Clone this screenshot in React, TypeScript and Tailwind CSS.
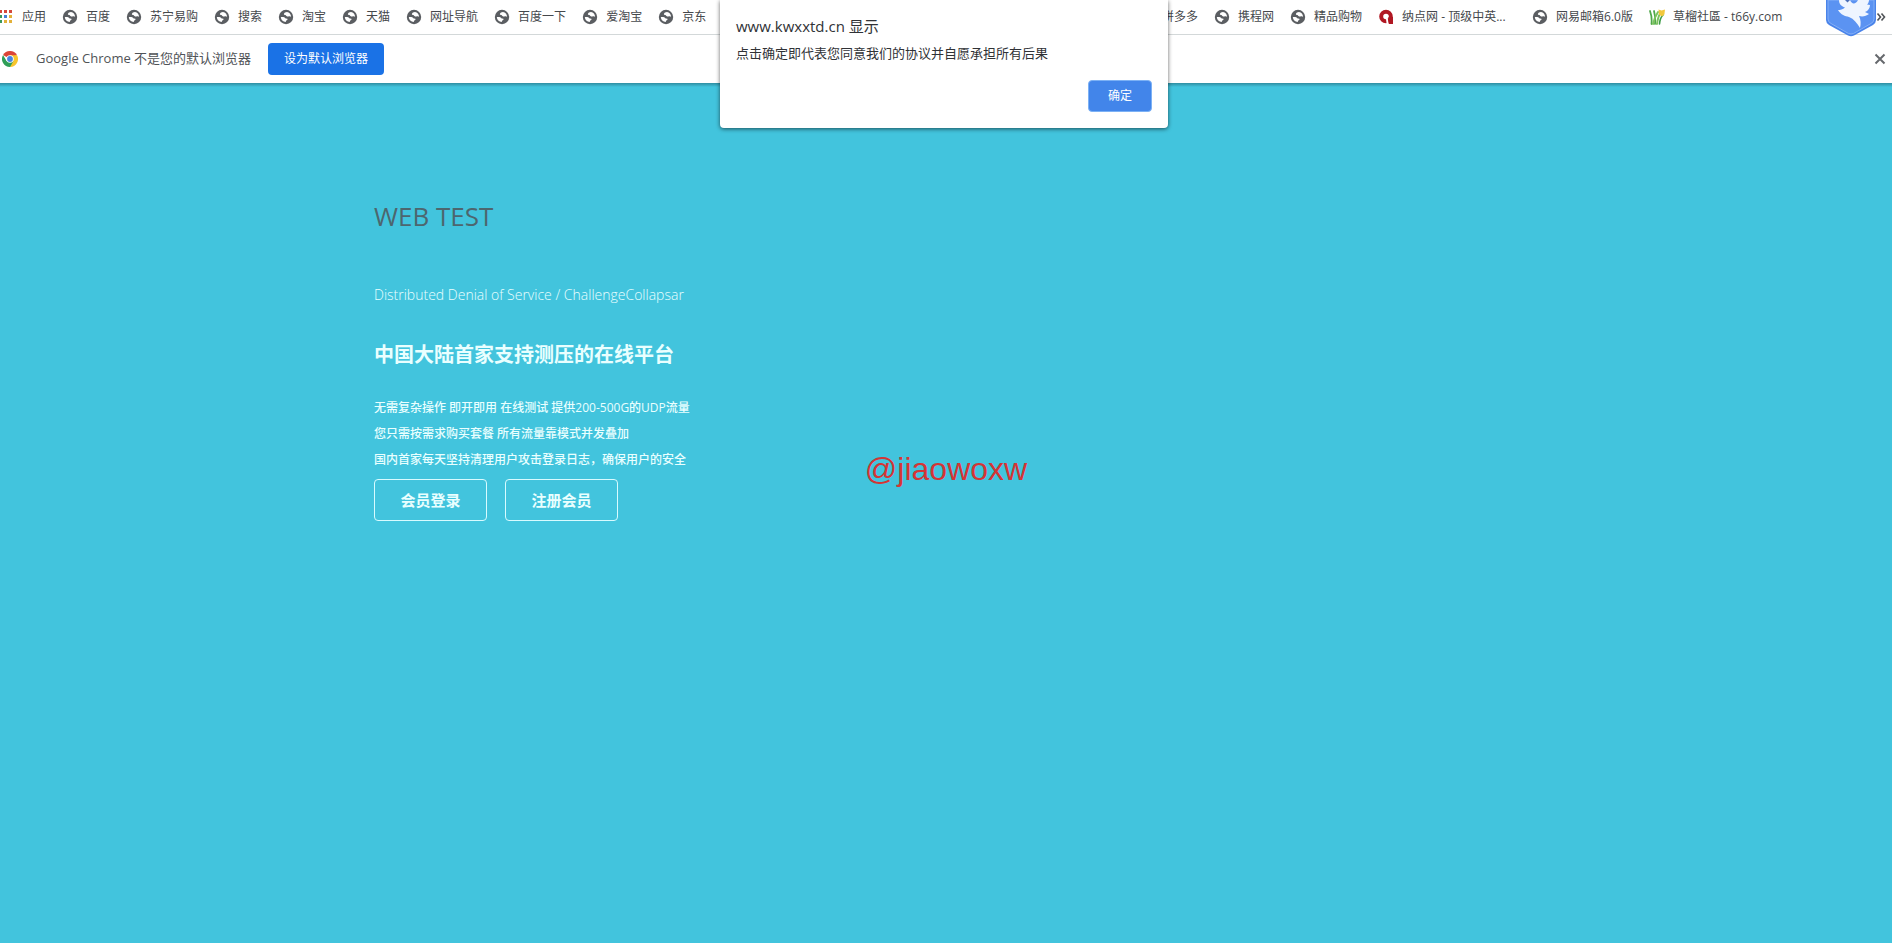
import React from 'react'

interface Bookmark {
  label: string
  icon?: React.ReactElement
  labelClass?: string
}

function GlobeIcon (): React.ReactElement {
  return (
    <svg viewBox="0 0 16 16" className="w-4 h-4 shrink-0">
      <circle cx="8" cy="8" r="7.2" fill="#5b5e62" />
      <path d="M9 3c-1.400 0-3 .9-3.100 1.900-.1.900.8.900 1.500 1.200.6.300.7 1.200 1.700 1.300.9.100 1.500-.4 2.400-.2.700.1 1 .5 1.600.5C13 5.200 11.300 3.300 9 3z" fill="#fff" />
      <path d="M2.800 8c1 .1 2.300-.1 3.300.2.900.3 1 1 1.800 1.200.7.200 1.500.1 1.700.7.200.8-1.100 1-1.400 1.700-.2.400-.2.800-.5 1.200C5 12.900 2.900 11 2.800 8z" fill="#fff" />
    </svg>
  )
}

function AppsIcon (): React.ReactElement {
  return (
    <svg viewBox="2 0 14 16" className="w-3.5 h-4 shrink-0">
      <path d="M1 1h3v3H1zM6 1h3v3H6zM11 1h3v3h-3z" fill="#d5493d" />
      <path d="M1 6h3v3H1zM1 11h3v3H1z" fill="#3c9a5b" />
      <path d="M6 6h3v3H6z" fill="#4380d6" />
      <path d="M11 6h3v3h-3zM6 11h3v3H6zM11 11h3v3h-3z" fill="#e3b13a" />
    </svg>
  )
}

function NadianIcon (): React.ReactElement {
  return (
    <svg viewBox="0 0 16 16" className="w-4 h-4 shrink-0">
      <circle cx="8" cy="7.500" r="4.800" fill="none" stroke="#b01722" strokeWidth="4" />
      <path d="M10.500 8H15v7h-4.500z" fill="#b01722" />
      <path d="M8 10l1.800-.5.700 5.500H8.600z" fill="#fff" />
    </svg>
  )
}

function GrassIcon (): React.ReactElement {
  return (
    <svg viewBox="0 0 16 16" className="w-4 h-4 shrink-0" fill="none" strokeLinecap="round">
      <path d="M2.500 15C3 10 2.500 6 1 2M6 15c.5-5 0-9-1-13" stroke="#4fa84a" strokeWidth="1.800" />
      <path d="M4 15c1-5 3-9 5-12M8 15c.5-4 1.500-8 3.500-11" stroke="#7cc35d" strokeWidth="2" />
      <path d="M10.500 15c.3-4 1.500-7 3.500-9" stroke="#3f9c48" strokeWidth="1.600" />
      <path d="M9.500.500l3 1L16 .500l-.6 5-2.400 2-3-2z" fill="#f2c83c" />
    </svg>
  )
}

function ChromeIcon (): React.ReactElement {
  return (
    <svg viewBox="0 0 16 16" className="w-4 h-4 shrink-0">
      <path d="M8 8L1.070 4A8 8 0 0 1 14.930 4z" fill="#dc4437" />
      <path d="M8 8l6.930-4A8 8 0 0 1 8 16z" fill="#f7c52c" />
      <path d="M1.070 4A8 8 0 0 0 8 16l3.460-6L8 8 4.540 10z" fill="#2f9e57" />
      <path d="M8 4.200h7.050L14 8H8z" fill="#f7c52c" />
      <circle cx="8" cy="8" r="3.800" fill="#fff" />
      <circle cx="8" cy="8" r="2.900" fill="#4684e0" />
    </svg>
  )
}

function BirdBadge (): React.ReactElement {
  return (
    <svg viewBox="0 0 52 37" className="w-[52px] h-[37px]">
      <path d="M1 0h50v20q0 3-3 5L29 35.500q-3 1.500-6 0L4 25q-3-2-3-5z" fill="#4a84ea" />
      <path d="M3 0h46v19q0 3-3 4.500L28.500 33.500q-2.500 1-5 0L6 23.500Q3 22 3 19z" fill="#5b93f2" stroke="#83aff7" />
      <path d="M14 0c0 4 2 6 6 7.500-2 2-5 2.500-7 2.500 3 5 7 6 11 7 5 2 8 6 11 11 1-4 1-8-1-12 4 1 7 0 10-2l-4-2c3-1 5-4 5-7l-3-.5c2-1.500 2-4.500 2-4.500H33c-2 4-6 5-8 0z" fill="#eef5ff" />
      <path d="M20 0h5l-2.500 2.500z" fill="#4a6fb8" />
    </svg>
  )
}

const leftBookmarks: Bookmark[] = [
  { label: '应用', icon: <AppsIcon /> },
  { label: '百度' },
  { label: '苏宁易购' },
  { label: '搜索' },
  { label: '淘宝' },
  { label: '天猫' },
  { label: '网址导航' },
  { label: '百度一下' },
  { label: '爱淘宝' },
  { label: '京东' }
]

const rightBookmarks: Bookmark[] = [
  { label: '拼多多' },
  { label: '携程网' },
  { label: '精品购物' },
  { label: '纳点网 - 顶级中英...', icon: <NadianIcon />, labelClass: 'w-[114px]' },
  { label: '网易邮箱6.0版' },
  { label: '草榴社區 - t66y.com', icon: <GrassIcon />, labelClass: 'w-[114px]' }
]

function BookmarkList ({ items }: { items: Bookmark[] }): React.ReactElement {
  return (
    <ul className="flex items-center gap-4">
      {items.map(item => (
        <li key={item.label}>
          <a href="#" className="flex items-center gap-2 whitespace-nowrap">
            {item.icon ?? <GlobeIcon />}
            <span className={item.labelClass}>{item.label}</span>
          </a>
        </li>
      ))}
    </ul>
  )
}

function BookmarkBar (): React.ReactElement {
  return (
    <nav className="relative flex items-center justify-between h-[35px] pb-px overflow-x-clip border-b border-[#d3d8d9] text-xs text-[#45484c]">
      <BookmarkList items={leftBookmarks} />
      <div className="flex items-center pr-1.5">
        <BookmarkList items={rightBookmarks} />
        <button type="button" aria-label="更多书签" className="ml-[89px]">
          <svg viewBox="0 0 10 10" className="w-2.5 h-2.5" fill="none" stroke="#505357" strokeWidth="1.6">
            <path d="M1.500 1.500L4.500 5l-3 3.500M5.500 1.500L8.500 5l-3 3.500" />
          </svg>
        </button>
      </div>
      <div className="absolute top-0 right-[15px]">
        <BirdBadge />
      </div>
    </nav>
  )
}

function InfoBar (): React.ReactElement {
  return (
    <div className="flex items-center h-12 pl-0.5 pr-1.5">
      <ChromeIcon />
      <p className="ml-[18px] w-[220px] text-[13px] text-[#505357]">Google Chrome 不是您的默认浏览器</p>
      <button type="button" className="ml-3 w-[116px] h-8 rounded bg-[#1a72e6] text-xs text-white">设为默认浏览器</button>
      <button type="button" aria-label="关闭" className="ml-auto">
        <svg viewBox="0 0 12 12" className="w-3 h-3" fill="none" stroke="#66696d" strokeWidth="2">
          <path d="M1.500 1.500l9 9M10.500 1.500l-9 9" />
        </svg>
      </button>
    </div>
  )
}

function AlertDialog (): React.ReactElement {
  return (
    <div className="absolute inset-x-0 top-0 z-20 flex justify-center pr-1">
      <div role="alertdialog" aria-labelledby="alert-title" className="flex flex-col w-[448px] h-32 p-4 rounded-b-sm bg-white shadow-[0_1px_4px_rgba(0,0,0,0.6)]">
        <h2 id="alert-title" className="text-[15px] leading-5 text-[#303236]">www.kwxxtd.cn 显示</h2>
        <p className="mt-[7px] text-[13px] leading-5 text-[#303236]">点击确定即代表您同意我们的协议并自愿承担所有后果</p>
        <button type="button" className="self-end mt-auto w-16 h-8 rounded-sm border border-[#7cb1f5] bg-[#4285ea] text-xs text-white">确定</button>
      </div>
    </div>
  )
}

function Hero (): React.ReactElement {
  return (
    <main className="flex-1 bg-[#42c4dd] text-[#e9ffff]">
      <div className="h-1 bg-linear-to-b from-[#2f8ea2] to-[#42c4dd]" />
      <div className="px-4 pt-[109px]">
        <div className="max-w-[1144px] mx-auto">
          <h1 className="text-[26px] leading-10 text-[#4d666e]">WEB TEST</h1>
          <p className="mt-[47px] text-sm leading-6 font-light">Distributed Denial of Service / ChallengeCollapsar</p>
          <h2 className="mt-[34px] text-xl leading-7 font-bold">中国大陆首家支持测压的在线平台</h2>
          <div className="mt-[26px] text-xs leading-[26px] font-medium">
            <p>无需复杂操作 即开即用 在线测试 提供200-500G的UDP流量</p>
            <p>您只需按需求购买套餐 所有流量靠模式并发叠加</p>
            <p>国内首家每天坚持清理用户攻击登录日志，确保用户的安全</p>
          </div>
          <div className="flex gap-[18px] mt-1.5 text-[15px] font-bold">
            <a href="#" className="flex items-center justify-center w-[113px] h-[42px] rounded border border-[#d8fbff]">会员登录</a>
            <a href="#" className="flex items-center justify-center w-[113px] h-[42px] rounded border border-[#d8fbff]">注册会员</a>
          </div>
        </div>
      </div>
    </main>
  )
}

export default function App (): React.ReactElement {
  return (
    <div className="relative flex flex-col min-h-screen bg-white font-['Open_Sans','Noto_Sans_CJK_SC',sans-serif]">
      <BookmarkBar />
      <InfoBar />
      <Hero />
      <AlertDialog />
      <div className="absolute inset-0 flex items-center justify-center pb-1.5 pointer-events-none">
        <span className="font-['Liberation_Sans',sans-serif] text-[32px] leading-10 text-[#d43535]">@jiaowoxw</span>
      </div>
    </div>
  )
}
